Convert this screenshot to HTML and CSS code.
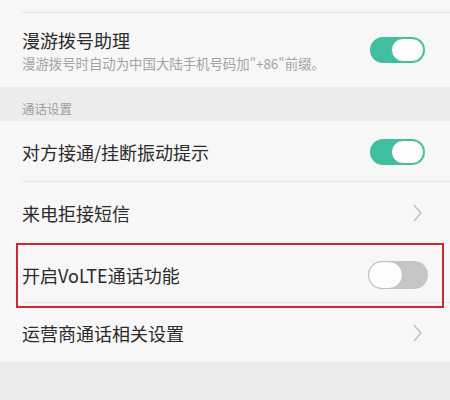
FILE: index.html
```html
<!DOCTYPE html>
<html lang="zh-CN">
  <head>
    <meta charset="UTF-8" />
    <meta name="viewport" content="width=device-width, initial-scale=1.0" />
    <title>通话设置</title>
    <link rel="stylesheet" href="styles.css">
  </head>
  <body>
    <div class="stub"></div>

    <div class="item tall">
      <div class="text">
        <div class="title">漫游拨号助理</div>
        <div class="sub">漫游拨号时自动为中国大陆手机号码加"+86"前缀。</div>
      </div>
      <span class="switch on"></span>
    </div>

    <div class="section">通话设置</div>

    <div class="item line">
      <div class="title">对方接通/挂断振动提示</div>
      <span class="switch on"></span>
    </div>

    <div class="item">
      <div class="title">来电拒接短信</div>
      <svg class="chevron" width="9" height="18" viewBox="0 0 9 18">
        <polyline points="1,1 8,9 1,17" fill="none" stroke="#bdbdbd" stroke-width="1.3" />
      </svg>
    </div>

    <div class="item line marked">
      <div class="title">开启VoLTE通话功能</div>
      <span class="switch off"></span>
    </div>

    <div class="item last">
      <div class="title">运营商通话相关设置</div>
      <svg class="chevron" width="9" height="18" viewBox="0 0 9 18">
        <polyline points="1,1 8,9 1,17" fill="none" stroke="#bdbdbd" stroke-width="1.3" />
      </svg>
    </div>

    <div class="footer"></div>
  </body>
</html>
```

FILE: styles.css
```css
body {
  margin: 0;
  padding: 0;
  background-color: #f7f7f7;
  font-family: "Noto Sans CJK SC", "Noto Sans", sans-serif;
  color: #2b2b2b;
}

.stub {
  height: 12px;
  margin-left: 22px;
  border-bottom: 1px solid #e4e4e4;
}

.item {
  display: flex;
  align-items: center;
  justify-content: space-between;
  height: 61px;
  box-sizing: border-box;
  padding: 0 25px 0 22px;
  position: relative;
}

.item.tall {
  height: 74px;
}

.item.marked {
  height: 60px;
  padding-top: 4px;
}

.item.last {
  height: 59px;
}

.item.line::before {
  content: "";
  position: absolute;
  left: 22px;
  right: 0;
  bottom: 0;
  border-bottom: 1px solid #e6e6e6;
}

.title {
  font-size: 18px;
  line-height: 24px;
}

.sub {
  font-size: 13.4px;
  line-height: 18px;
  color: #a3a3a3;
  margin-top: 2px;
}

.section {
  height: 34px;
  box-sizing: border-box;
  padding: 12px 22px 0;
  background-color: #ececec;
  font-size: 12.5px;
  color: #9c9c9c;
}

.switch {
  display: block;
  width: 55px;
  height: 26px;
  border-radius: 13px;
  position: relative;
  flex-shrink: 0;
}

.switch::after {
  content: "";
  position: absolute;
  top: 1px;
  width: 31px;
  height: 22px;
  border-radius: 12px;
  background-color: #fdfdfd;
}

.switch.on {
  background-color: #3fbf9f;
}

.switch.on::after {
  right: 1px;
  border: 1px solid #4cb99c;
}

.switch.off {
  width: 60px;
  height: 28px;
  border-radius: 14px;
  margin-right: -3px;
  background-color: #c6c6c6;
}

.switch.off::after {
  left: 0;
  top: 0;
  width: 33px;
  height: 26px;
  border-radius: 14px;
  border: 1px solid #bcbcbc;
}

.chevron {
  display: block;
  margin-right: 3px;
}

.marked::after {
  content: "";
  position: absolute;
  left: 16px;
  right: 6px;
  top: 0;
  bottom: -5px;
  border: 2px solid #c92a33;
}

.footer {
  height: 40px;
  background-color: #ececec;
}
```
